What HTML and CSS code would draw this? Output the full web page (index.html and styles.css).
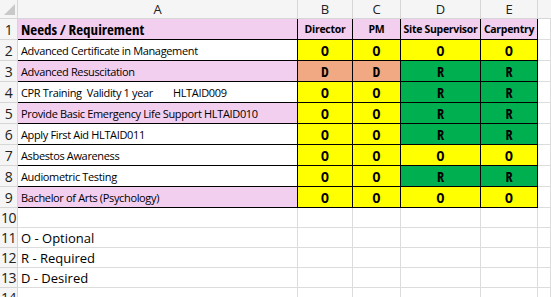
FILE: index.html
```html
<!DOCTYPE html>
<html>
<head>
<meta charset="utf-8">
<link rel="stylesheet" href="styles.css">
</head>
<body>
<div class="sheet">
  <div class="hd corner"><span class="tri"></span></div>
  <div class="hd col">A</div>
  <div class="hd col">B</div>
  <div class="hd col">C</div>
  <div class="hd col">D</div>
  <div class="hd col">E</div>
  <div class="hd col last"></div>

  <div class="hd rn">1</div>
  <div class="c a pink title">Needs / Requirement</div>
  <div class="c v pink colh">Director</div>
  <div class="c v pink colh">PM</div>
  <div class="c v pink colh">Site Supervisor</div>
  <div class="c v pink colh">Carpentry</div>
  <div class="c g"></div>

  <div class="hd rn">2</div>
  <div class="c a">Advanced Certificate in Management</div>
  <div class="c v y">O</div><div class="c v y">O</div><div class="c v y">O</div><div class="c v y">O</div>
  <div class="c g"></div>

  <div class="hd rn">3</div>
  <div class="c a pink">Advanced Resuscitation</div>
  <div class="c v o">D</div><div class="c v o">D</div><div class="c v gr">R</div><div class="c v gr">R</div>
  <div class="c g"></div>

  <div class="hd rn">4</div>
  <div class="c a pre">CPR Training  Validity 1 year        HLTAID009</div>
  <div class="c v y">O</div><div class="c v y">O</div><div class="c v gr">R</div><div class="c v gr">R</div>
  <div class="c g"></div>

  <div class="hd rn">5</div>
  <div class="c a pink">Provide Basic Emergency Life Support HLTAID010</div>
  <div class="c v y">O</div><div class="c v y">O</div><div class="c v gr">R</div><div class="c v gr">R</div>
  <div class="c g"></div>

  <div class="hd rn">6</div>
  <div class="c a">Apply First Aid HLTAID011</div>
  <div class="c v y">O</div><div class="c v y">O</div><div class="c v gr">R</div><div class="c v gr">R</div>
  <div class="c g"></div>

  <div class="hd rn">7</div>
  <div class="c a">Asbestos Awareness</div>
  <div class="c v y">O</div><div class="c v y">O</div><div class="c v y">O</div><div class="c v y">O</div>
  <div class="c g"></div>

  <div class="hd rn">8</div>
  <div class="c a">Audiometric Testing</div>
  <div class="c v y">O</div><div class="c v y">O</div><div class="c v gr">R</div><div class="c v gr">R</div>
  <div class="c g"></div>

  <div class="hd rn">9</div>
  <div class="c a pink">Bachelor of Arts (Psychology)</div>
  <div class="c v y">O</div><div class="c v y">O</div><div class="c v y">O</div><div class="c v y">O</div>
  <div class="c g"></div>

  <div class="hd rn">10</div>
  <div class="c g"></div><div class="c g"></div><div class="c g"></div><div class="c g"></div><div class="c g"></div><div class="c g"></div>

  <div class="hd rn">11</div>
  <div class="c g leg">O - Optional</div><div class="c g"></div><div class="c g"></div><div class="c g"></div><div class="c g"></div><div class="c g"></div>

  <div class="hd rn">12</div>
  <div class="c g leg">R - Required</div><div class="c g"></div><div class="c g"></div><div class="c g"></div><div class="c g"></div><div class="c g"></div>

  <div class="hd rn">13</div>
  <div class="c g leg">D - Desired</div><div class="c g"></div><div class="c g"></div><div class="c g"></div><div class="c g"></div><div class="c g"></div>

  <div class="hd rn">14</div>
  <div class="c g"></div><div class="c g"></div><div class="c g"></div><div class="c g"></div><div class="c g"></div><div class="c g"></div>
</div>
</body>
</html>
```
FILE: styles.css
```css
html, body {
  margin: 0;
  padding: 0;
  background: #ffffff;
  overflow: hidden;
}
.sheet {
  display: grid;
  grid-template-columns: 18px 280px 55px 48px 80px 57px 1fr;
  grid-template-rows: 19px repeat(9, 21px) repeat(5, 20px);
  width: 551px;
  font-family: "Open Sans", "Noto Sans", sans-serif;
  color: #000;
}
.hd {
  background: #f5f5f5;
  border-right: 1px solid #d6d6d6;
  border-bottom: 1px solid #d6d6d6;
  display: flex;
  align-items: center;
  justify-content: center;
  font-size: 14px;
  color: #222;
  box-sizing: border-box;
  position: relative;
}
.hd.col { font-size: 13px; }
.hd.rn { font-size: 14px; letter-spacing: -0.5px; }
.hd.last { border-right: none; }
.corner .tri {
  position: absolute;
  right: 2px;
  bottom: 3px;
  width: 0;
  height: 0;
  border-left: 11px solid transparent;
  border-bottom: 11px solid #c9c9c9;
}
.c {
  box-sizing: border-box;
  border-right: 1px solid #000;
  border-bottom: 1px solid #000;
  display: flex;
  align-items: center;
  overflow: hidden;
  white-space: nowrap;
}
.c.g {
  border-right: 1px solid #dcdcdc;
  border-bottom: 1px solid #dcdcdc;
}
.a {
  padding-left: 3px;
  font-size: 11px;
  letter-spacing: -0.35px;
}
.pre { white-space: pre; }
.title {
  font-size: 15px;
  font-stretch: 75%;
  font-weight: 700;
  letter-spacing: 0;
}
.v {
  justify-content: center;
  font-size: 14px;
  font-stretch: 75%;
  font-weight: 700;
}
.colh {
  font-size: 10.5px;
  font-stretch: 100%;
  letter-spacing: -0.3px;
}
.pink { background: #f2ceef; }
.y { background: #ffff00; }
.gr { background: #00b050; }
.o { background: #f1a983; }
.leg {
  padding-left: 3px;
  font-size: 13px;
}
```
